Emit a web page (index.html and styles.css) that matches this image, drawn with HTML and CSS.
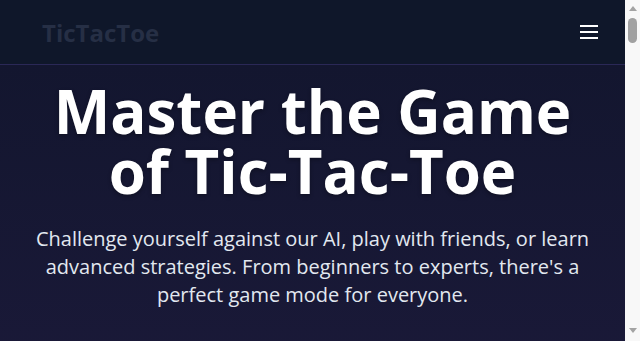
FILE: index.html
```html
<!DOCTYPE html>
<html lang="en">
<head>
<meta charset="utf-8">
<title>TicTacToe</title>
<link rel="stylesheet" href="styles.css">
</head>
<body>
<div class="page">
  <header class="nav">
    <div class="logo">TicTacToe</div>
    <button class="menu" aria-label="Menu">
      <svg width="18" height="14" viewBox="0 0 18 14"><path d="M0 1h18M0 7h18M0 13h18" stroke="#fff" stroke-width="2"/></svg>
    </button>
  </header>
  <main class="hero">
    <h1 class="title">Master the Game of Tic-Tac-Toe</h1>
    <p class="lead">Challenge yourself against our AI, play with friends, or learn advanced strategies. From beginners to experts, there's a perfect game mode for everyone.</p>
  </main>
</div>
<div class="scrollbar" aria-hidden="true">
  <span class="arrow up"></span>
  <span class="thumb"></span>
  <span class="arrow down"></span>
</div>
</body>
</html>
```
FILE: styles.css
```css
html { scrollbar-width: none; }
body {
  margin: 0;
  font-family: "Open Sans", "Noto Sans", sans-serif;
  background: #1b1939;
  color: #fff;
}
.page {
  margin-right: 15px;
}
.nav {
  height: 64px;
  display: flex;
  align-items: center;
  justify-content: space-between;
  padding: 0 27px 0 42px;
  background: #0f172a;
  border-bottom: 1px solid #2a2856;
}
.logo {
  font-size: 24px;
  font-weight: 700;
  color: #262f45;
}
.menu {
  background: none;
  border: 0;
  padding: 0;
  display: flex;
}
.hero {
  padding: 16px 24px 0;
  text-align: center;
  background: linear-gradient(#13162f, #1c1a3b 400px);
  min-height: 4100px;
}
.title {
  margin: 0 auto;
  font-size: 60px;
  line-height: 60px;
  font-weight: 700;
  text-shadow: 0 2px 4px rgba(0,0,0,0.3);
}
.lead {
  margin: 24px auto 0;
  font-size: 20px;
  line-height: 28px;
  color: #e2e8f0;
}
.scrollbar {
  position: fixed;
  top: 0;
  right: 0;
  bottom: 0;
  width: 15px;
  background: #f8f8f8;
  display: flex;
  flex-direction: column;
  align-items: center;
  padding: 6px 0 8px;
  box-sizing: border-box;
}
.arrow {
  width: 0;
  height: 0;
  border-left: 4px solid transparent;
  border-right: 4px solid transparent;
}
.arrow.up { border-bottom: 5px solid #a3a3a3; }
.arrow.down { border-top: 5px solid #a3a3a3; margin-top: auto; }
.thumb {
  margin-top: 7px;
  width: 9px;
  height: 25px;
  border-radius: 5px;
  background: #a1a1a1;
}
```
